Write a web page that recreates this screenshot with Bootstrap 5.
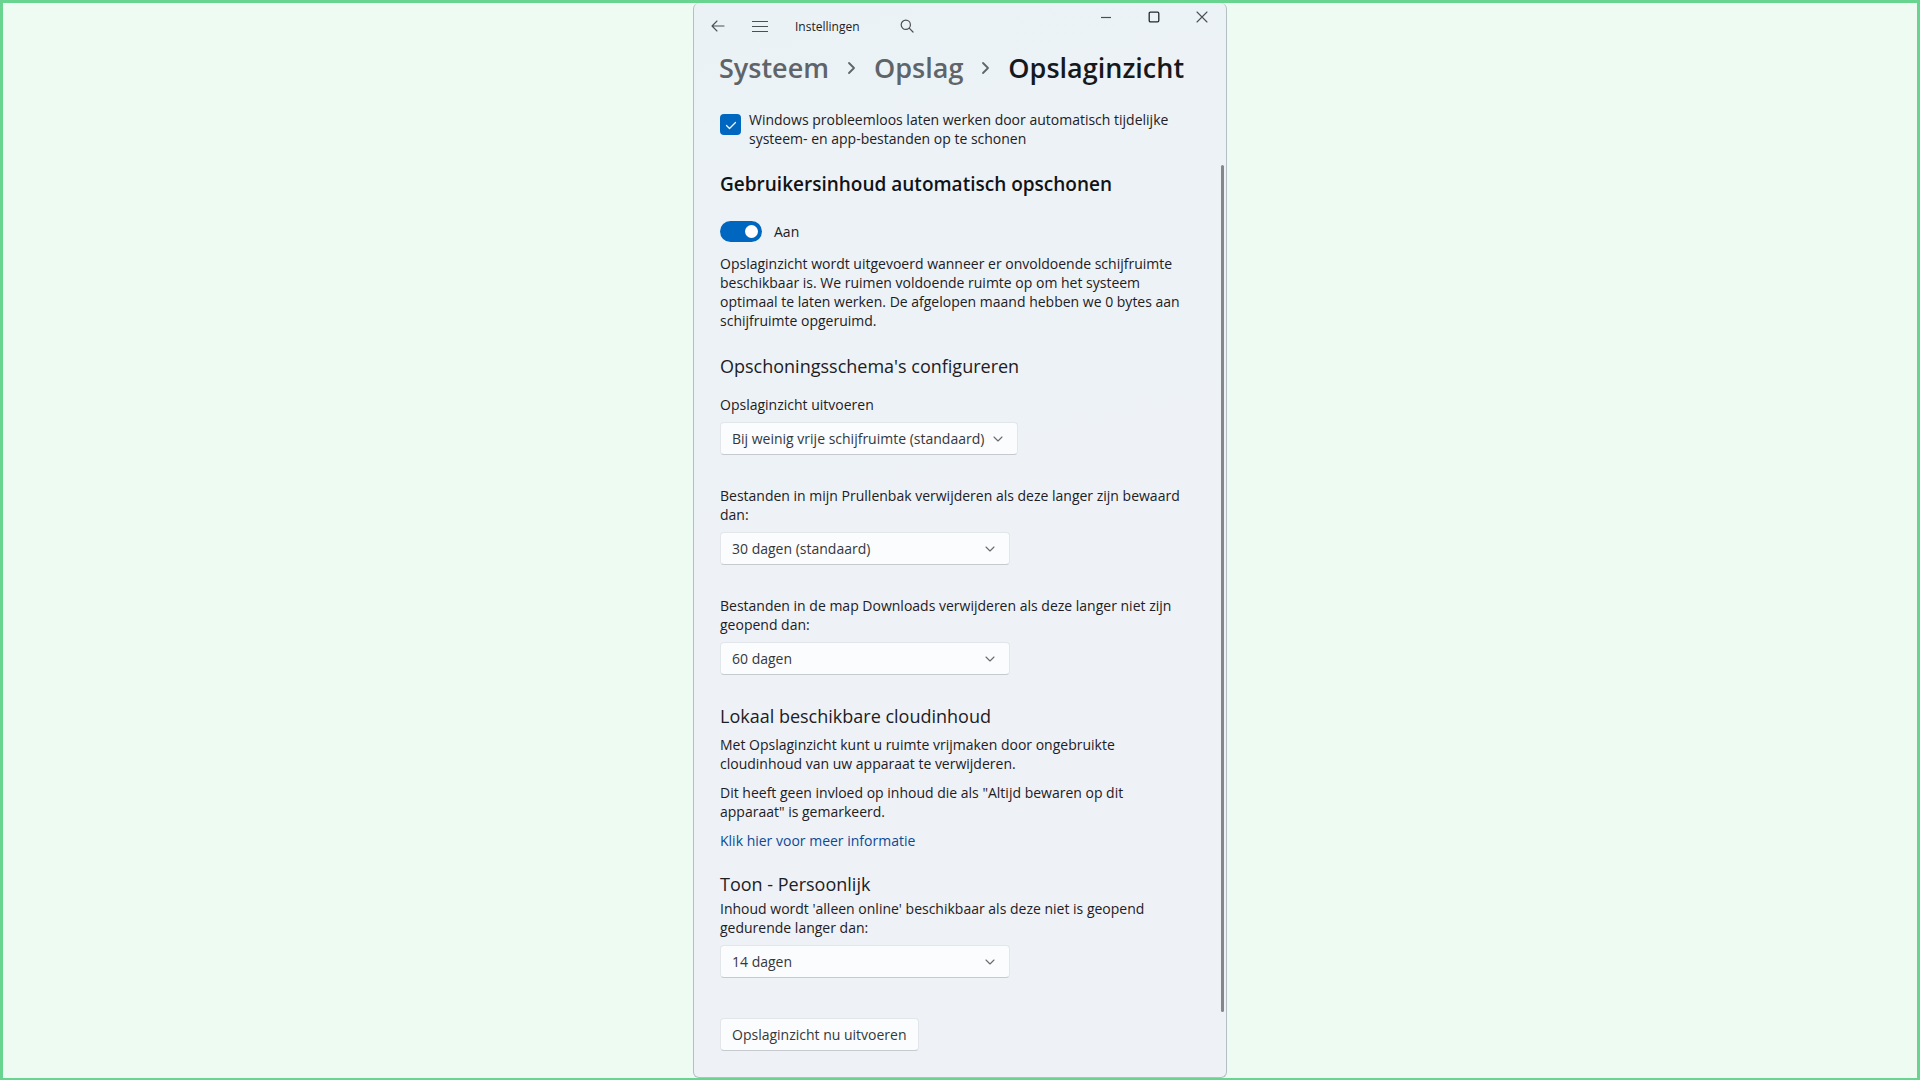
<!DOCTYPE html>
<html lang="nl">
<head>
<meta charset="utf-8">
<meta name="viewport" content="width=device-width, initial-scale=1">
<title>Instellingen - Opslaginzicht</title>
<link href="https://cdn.jsdelivr.net/npm/bootstrap@5.3.0/dist/css/bootstrap.min.css" rel="stylesheet">
<style>
  body { font-family: "Open Sans", "Noto Sans", sans-serif; font-size: 14px; line-height: 19px; color: #1c2024; }
  .desktop { background: #edfbf2; border: 3px solid #69d48f; }
  .app-window { max-width: 534px; background: linear-gradient(165deg, #ebf2f6 0%, #eef2f7 45%, #eef1f6 100%); border: 1px solid #b4bfc4; border-top: 0; border-radius: 6px; }
  .title-bar { height: 45px; padding-left: 3px; font-size: 12px; }
  .icon-btn { width: 42px; height: 32px; padding: 0; border: 0; background: none; color: #4a4f54; display: flex; align-items: center; justify-content: center; }
  .caption-btn { width: 48px; height: 28px; }
  .app-name { padding-top: 2px; margin: 0 26px 0 14px; }
  .crumbs { font-size: 27px; line-height: 39px; font-weight: 600; padding-left: 25px; gap: 17px; }
  .crumbs a { color: #5f6468; text-decoration: none; }
  .crumbs svg { color: #5f6468; }
  .crumbs h1 { font: inherit; margin: 0; color: #16191c; }
  .page-content { padding: 23px 33px 26px 26px; min-width: 0; }
  .page-content h2 { font-size: 19px; line-height: 28px; font-weight: 600; margin: 22px 0 23px; color: #101316; }
  .page-content h3 { font-size: 18px; line-height: 24px; font-weight: 400; margin: 0; }
  .page-content .form-check-input { border: 0; box-shadow: none; flex: none; float: none; margin-left: 0; margin-bottom: 0; }
  .page-content .form-check-input:checked { background-color: #0067c0; }
  .tick.form-check-input { width: 21px; height: 21px; border-radius: 4px; margin-top: 4px; }
  .tick:checked[type=checkbox] { background-size: 16px; background-image: url("data:image/svg+xml,%3Csvg xmlns='http://www.w3.org/2000/svg' viewBox='0 0 16 16'%3E%3Cpath d='M3.5 8.5l3 3 6-6' fill='none' stroke='white' stroke-width='1.2' stroke-linecap='round' stroke-linejoin='round'/%3E%3C/svg%3E"); }
  .toggle.form-check-input { width: 42px; height: 21px; border-radius: 11px; margin-top: 0; }
  .toggle.form-check-input:checked { background-size: 21px; background-position: right center; background-image: url("data:image/svg+xml,%3Csvg xmlns='http://www.w3.org/2000/svg' viewBox='0 0 21 21'%3E%3Ccircle cx='10.5' cy='10.5' r='6.5' fill='white'/%3E%3C/svg%3E"); }
  .schedules { gap: 31px; margin-top: 17px; }
  .field label { display: block; margin-bottom: 8px; }
  .win-control { height: 33px; font-size: 14px; line-height: 19px; color: #34383c; background-color: #fbfcfd; border: 1px solid #e2e5e9; border-bottom-color: #c6c9cd; border-radius: 4px; padding: 6px 11px; }
  .win-select { width: 290px; max-width: 100%; background-position: right 13px center; background-size: 12px; background-image: url("data:image/svg+xml,%3Csvg xmlns='http://www.w3.org/2000/svg' viewBox='0 0 12 12'%3E%3Cpath d='M2 4l4 4 4-4' fill='none' stroke='%23686c70' stroke-width='1.1' stroke-linecap='round' stroke-linejoin='round'/%3E%3C/svg%3E"); }
  .win-select-wide { width: 298px; }
  .cloud-intro { margin: 29px 0 22px; }
  .cloud-intro h3 { margin-bottom: 7px; }
  .cloud-intro p { margin-bottom: 10px; }
  .personal { margin-top: 3px; }
  .more-link { color: #0b4a94; text-decoration: none; }
  .scroll-rail { width: 3px; background: #84878b; border-radius: 2px; margin: 78px 2px 65px 0; flex: none; }
</style>
</head>
<body>
<div class="desktop min-vh-100 d-flex justify-content-center">
  <main class="app-window w-100 d-flex flex-column">
    <header class="title-bar d-flex align-items-center">
      <button class="icon-btn" type="button" aria-label="Terug"><svg width="14" height="14" viewBox="0 0 14 14" fill="none" stroke="currentColor" stroke-width="1.1" stroke-linecap="round" stroke-linejoin="round"><path d="M13 7H1M6 2L1 7l5 5"/></svg></button>
      <button class="icon-btn" type="button" aria-label="Menu"><svg width="16" height="12" viewBox="0 0 16 12" stroke="currentColor" stroke-width="1"><path d="M0 1.5h16M0 6.5h16M0 11.5h16"/></svg></button>
      <span class="app-name">Instellingen</span>
      <button class="icon-btn" type="button" aria-label="Zoeken"><svg width="14" height="14" viewBox="0 0 14 14" fill="none" stroke="currentColor" stroke-width="1.2" stroke-linecap="round"><circle cx="5.8" cy="5.8" r="4.6"/><path d="M9.2 9.2L13 13"/></svg></button>
      <div class="d-flex ms-auto align-self-start">
        <button class="icon-btn caption-btn" type="button" aria-label="Minimaliseren"><svg width="10" height="10" viewBox="0 0 10 10" stroke="currentColor" stroke-width="1.2"><path d="M0 5.5h10"/></svg></button>
        <button class="icon-btn caption-btn" type="button" aria-label="Maximaliseren"><svg width="12" height="12" viewBox="0 0 12 12" fill="none" stroke="#24282c" stroke-width="1.3"><rect x="1.2" y="1.2" width="9.6" height="9.6" rx="1.2"/></svg></button>
        <button class="icon-btn caption-btn" type="button" aria-label="Sluiten"><svg width="12" height="12" viewBox="0 0 12 12" stroke="currentColor" stroke-width="1.1" stroke-linecap="round"><path d="M1 1l10 10M11 1L1 11"/></svg></button>
      </div>
    </header>
    <nav class="crumbs d-flex align-items-center" aria-label="Kruimelpad">
      <a href="#">Systeem</a>
      <svg width="11" height="14" viewBox="0 0 11 14" fill="none" stroke="currentColor" stroke-width="1.8" stroke-linecap="round" stroke-linejoin="round"><path d="M3 2l5 5-5 5"/></svg>
      <a href="#">Opslag</a>
      <svg width="11" height="14" viewBox="0 0 11 14" fill="none" stroke="currentColor" stroke-width="1.8" stroke-linecap="round" stroke-linejoin="round"><path d="M3 2l5 5-5 5"/></svg>
      <h1>Opslaginzicht</h1>
    </nav>
    <div class="d-flex flex-grow-1">
      <div class="page-content flex-grow-1">
        <div class="d-flex align-items-start">
          <input class="form-check-input tick" type="checkbox" id="temp" checked>
          <label class="ps-2" for="temp">Windows probleemloos laten werken door automatisch tijdelijke<br>systeem- en app-bestanden op te schonen</label>
        </div>
        <h2>Gebruikersinhoud automatisch opschonen</h2>
        <div class="d-flex align-items-center mb-2 pb-1">
          <input class="form-check-input toggle" type="checkbox" role="switch" id="auto" checked>
          <label class="ms-2 ps-1" for="auto">Aan</label>
        </div>
        <p class="mb-4">Opslaginzicht wordt uitgevoerd wanneer er onvoldoende schijfruimte<br>beschikbaar is. We ruimen voldoende ruimte op om het systeem<br>optimaal te laten werken. De afgelopen maand hebben we 0 bytes aan<br>schijfruimte opgeruimd.</p>
        <h3>Opschoningsschema's configureren</h3>
        <div class="schedules d-flex flex-column">
          <div class="field">
            <label for="run">Opslaginzicht uitvoeren</label>
            <select class="form-select win-control win-select win-select-wide" id="run"><option>Bij weinig vrije schijfruimte (standaard)</option></select>
          </div>
          <div class="field">
            <label for="bin">Bestanden in mijn Prullenbak verwijderen als deze langer zijn bewaard<br>dan:</label>
            <select class="form-select win-control win-select" id="bin"><option>30 dagen (standaard)</option></select>
          </div>
          <div class="field">
            <label for="down">Bestanden in de map Downloads verwijderen als deze langer niet zijn<br>geopend dan:</label>
            <select class="form-select win-control win-select" id="down"><option>60 dagen</option></select>
          </div>
        </div>
        <section class="cloud-intro">
          <h3>Lokaal beschikbare cloudinhoud</h3>
          <p>Met Opslaginzicht kunt u ruimte vrijmaken door ongebruikte<br>cloudinhoud van uw apparaat te verwijderen.</p>
          <p>Dit heeft geen invloed op inhoud die als "Altijd bewaren op dit<br>apparaat" is gemarkeerd.</p>
          <a class="more-link" href="#">Klik hier voor meer informatie</a>
        </section>
        <h3>Toon - Persoonlijk</h3>
        <div class="field personal mb-4 pb-3">
          <label for="cloud">Inhoud wordt 'alleen online' beschikbaar als deze niet is geopend<br>gedurende langer dan:</label>
          <select class="form-select win-control win-select" id="cloud"><option>14 dagen</option></select>
        </div>
        <button class="btn win-control" type="button">Opslaginzicht nu uitvoeren</button>
      </div>
      <div class="scroll-rail"></div>
    </div>
  </main>
</div>
<script src="https://cdn.jsdelivr.net/npm/bootstrap@5.3.0/dist/js/bootstrap.bundle.min.js"></script>
</body>
</html>
